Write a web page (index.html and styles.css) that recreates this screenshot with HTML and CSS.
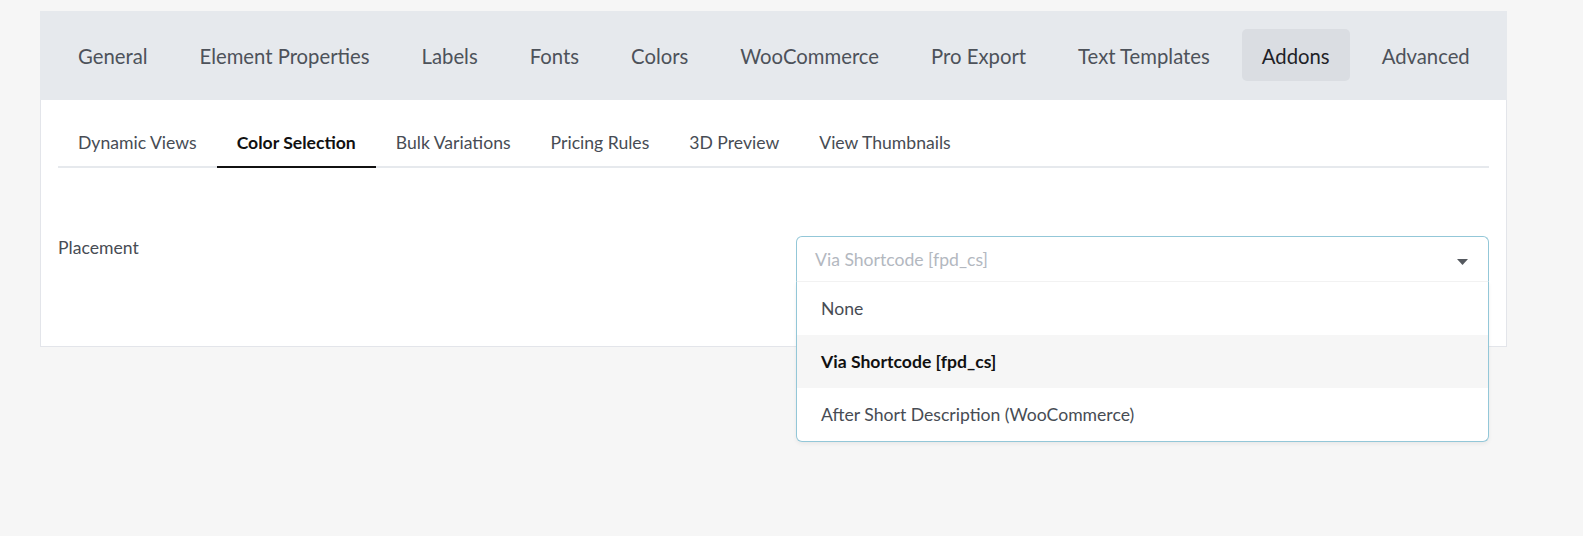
FILE: index.html
```html
<!DOCTYPE html>
<html>
<head>
<meta charset="utf-8">
<link rel="stylesheet" href="styles.css">
</head>
<body>
<div class="page">
<div class="panel">
  <nav class="main-tabs">
    <a class="tab">General</a>
    <a class="tab">Element Properties</a>
    <a class="tab">Labels</a>
    <a class="tab">Fonts</a>
    <a class="tab">Colors</a>
    <a class="tab">WooCommerce</a>
    <a class="tab">Pro Export</a>
    <a class="tab">Text Templates</a>
    <a class="tab active">Addons</a>
    <a class="tab">Advanced</a>
  </nav>
  <div class="content">
    <div class="sub-tabs">
      <a class="sub-tab">Dynamic Views</a>
      <a class="sub-tab active">Color Selection</a>
      <a class="sub-tab">Bulk Variations</a>
      <a class="sub-tab">Pricing Rules</a>
      <a class="sub-tab">3D Preview</a>
      <a class="sub-tab">View Thumbnails</a>
    </div>
    <div class="field-row">
      <div class="field-label">Placement</div>
      <div class="select">
        <div class="select-head">
          <span class="placeholder">Via Shortcode [fpd_cs]</span>
          <svg class="caret" width="11" height="6" viewBox="0 0 11 6"><path d="M0 0 L11 0 L5.5 6 Z" fill="#55595f"/></svg>
        </div>
        <div class="menu">
          <div class="option">None</div>
          <div class="option selected">Via Shortcode [fpd_cs]</div>
          <div class="option">After Short Description (WooCommerce)</div>
        </div>
      </div>
    </div>
  </div>
</div>
</div>
</body>
</html>
```

FILE: styles.css
```css
html, body {
  margin: 0;
  padding: 0;
  background: #f6f6f6;
  font-family: Lato, "Open Sans", sans-serif;
}
body {
  min-height: 100vh;
}
.page {
  min-height: 536px;
  padding-top: 11px;
  box-sizing: border-box;
}
.panel {
  width: 1467px;
  margin: 0 0 0 40px;
  background: #fff;
  border: 1px solid #e3e5ea;
  border-top: none;
  box-sizing: border-box;
}
.main-tabs {
  background: #e6e9ed;
  height: 89px;
  margin: 0 -1px;
  box-sizing: border-box;
  padding: 18px 18px 0 18px;
  display: flex;
  gap: 12px;
}
.tab {
  font-size: 20.3px;
  line-height: 26px;
  padding: 14px 20px 12px 20px;
  color: #4d525a;
  border-radius: 5px;
  height: 52px;
  box-sizing: border-box;
  white-space: nowrap;
  flex-shrink: 0;
}
.tab.active {
  background: #dadde2;
  color: #1e2227;
}
.content {
  padding: 18px 17px 64px 17px;
}
.sub-tabs {
  display: flex;
  border-bottom: 2px solid #e6e9ed;
}
.sub-tab {
  font-size: 17.6px;
  line-height: 24px;
  padding: 13px 20px 11px 20px;
  color: #474c54;
  border-bottom: 2px solid transparent;
  margin-bottom: -2px;
  white-space: nowrap;
}
.sub-tab.active {
  color: #111;
  font-weight: bold;
  border-bottom-color: #111;
}
.field-row {
  display: grid;
  grid-template-columns: 738px 1fr;
  margin-top: 68px;
}
.field-label {
  font-size: 17.6px;
  line-height: 24px;
  color: #474c54;
}
.select {
  position: relative;
  z-index: 10;
  height: 46px;
}
.select-head {
  height: 46px;
  box-sizing: border-box;
  border: 1px solid #93c7d8;
  border-bottom: 1px solid #f3f3f3;
  border-radius: 6px 6px 0 0;
  display: flex;
  align-items: center;
  justify-content: space-between;
  padding: 0 20px 0 18px;
  background: #fff;
}
.placeholder {
  font-size: 17.6px;
  color: #b3b8bf;
}
.caret {
  margin-top: 6px;
}
.menu {
  position: absolute;
  z-index: 20;
  top: 46px;
  left: 0;
  right: 0;
  background: #fff;
  border: 1px solid #93c7d8;
  border-top: none;
  border-radius: 0 0 6px 6px;
  box-shadow: 0 2px 4px rgba(0,0,0,0.06);
}
.option {
  height: 53px;
  line-height: 53px;
  padding-left: 24px;
  font-size: 17.6px;
  color: #474c54;
}
.option.selected {
  background: #f6f6f6;
  color: #111;
  font-weight: bold;
}
```
